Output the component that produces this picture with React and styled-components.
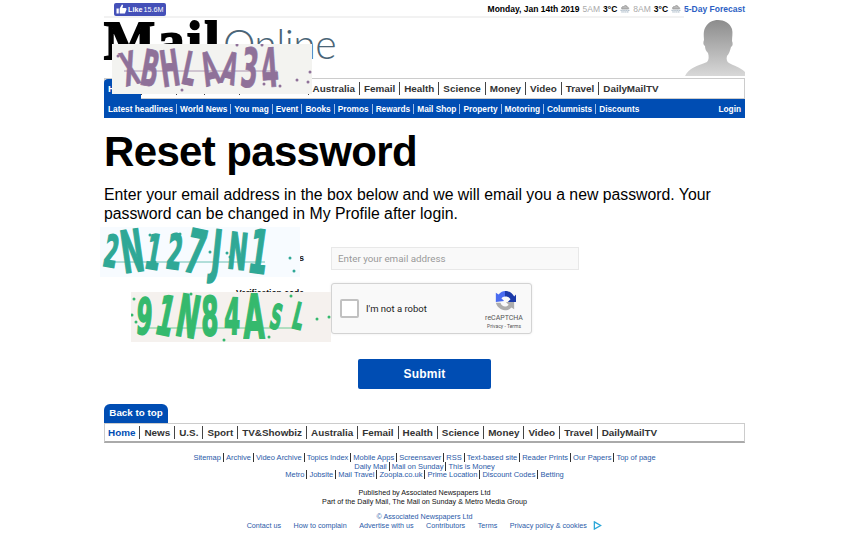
import React from "react";
import styled, { createGlobalStyle } from "styled-components";

const GlobalStyle = createGlobalStyle`
  html, body {
    margin: 0;
    padding: 0;
    background: #fff;
    font-family: "Liberation Sans", Arial, sans-serif;
    color: #000;
  }
  a {
    color: inherit;
    text-decoration: none;
  }
`;

const Page = styled.div`
  position: relative;
  width: 850px;
  height: 540px;
  overflow: hidden;
`;

const Wrap = styled.div`
  width: 641px;
  margin-left: 104px;
`;

const TopBar = styled.div`
  height: 16px;
  display: flex;
  align-items: center;
  justify-content: space-between;
  padding-left: 10px;
  font-size: 8.5px;
`;

const LikeButton = styled.span`
  display: inline-flex;
  align-items: center;
  gap: 1px;
  height: 13px;
  width: 52px;
  box-sizing: border-box;
  padding: 0 1px 0 2px;
  margin-top: 2px;
  background: #4450b8;
  border-radius: 2px;
  color: #fff;
  font-size: 7.2px;
  font-weight: bold;
  white-space: nowrap;
  svg {
    flex: none;
  }
  small {
    font-size: 7.2px;
    font-weight: normal;
  }
`;

const DateLine = styled.div`
  display: flex;
  align-items: center;
  gap: 3px;
  font-weight: bold;
  white-space: nowrap;
  padding-top: 1px;
`;

const Hour = styled.span`
  color: #aaa;
  font-weight: normal;
`;

const Forecast = styled.a`
  color: #2d5fc4;
`;

const Masthead = styled.div`
  height: 62px;
  position: relative;
  display: flex;
  justify-content: space-between;
  box-sizing: border-box;
  &::before {
    content: "";
    position: absolute;
    left: 0;
    top: 0;
    width: 580px;
    height: 2px;
    background: #f2f2f2;
  }
`;

const Logo = styled.div`
  display: flex;
  align-items: baseline;
  height: 60px;
  white-space: nowrap;
`;

const LogoMail = styled.span`
  display: inline-block;
  font-family: "Liberation Serif", serif;
  font-weight: bold;
  font-size: 54px;
  line-height: 50px;
  letter-spacing: 2.5px;
  -webkit-text-stroke: 2px #000;
`;

const LogoOnline = styled.span`
  display: inline-block;
  font-family: "Lato", sans-serif;
  font-weight: 300;
  font-size: 41px;
  line-height: 50px;
  letter-spacing: -0.6px;
  color: #4b6577;
  margin-left: 1px;
`;

const Silhouette = styled.svg`
  width: 60px;
  height: 60px;
`;

const Nav = styled.ul`
  list-style: none;
  margin: 0;
  height: ${(p) => (p.$closed ? 20 : 21)}px;
  box-sizing: border-box;
  padding: 0 0 ${(p) => (p.$closed ? 1 : 0)}px 3px;
  display: flex;
  align-items: center;
  background: #fff;
  border: 1px solid #ccc;
  border-bottom: ${(p) => (p.$closed ? "2px solid #aaa" : "1px solid #ccc")};
  font-size: 9.9px;
  font-weight: bold;
  color: #333;
`;

const NavItem = styled.li`
  padding: 0 4px;
  height: 13px;
  line-height: 13px;
  white-space: nowrap;
  border-left: 1px solid #444;
  color: #333;
  &:first-child {
    border-left: none;
    padding-left: 0;
    color: #004db3;
  }
`;

const TabItem = styled.li`
  align-self: flex-end;
  box-sizing: border-box;
  width: 37px;
  height: 20px;
  margin: 0 0 -1px -4px;
  padding-left: 4px;
  line-height: 19px;
  background: #004db3;
  color: #fff;
  border-radius: 4px 4px 0 0;
`;

const SubNav = styled.div`
  height: 19px;
  background: #004db3;
  color: #fff;
  display: flex;
  align-items: center;
  justify-content: space-between;
  padding: 0 4px;
  font-size: 8.3px;
  font-weight: bold;
`;

const SubLinks = styled.div`
  display: flex;
  align-items: center;
`;

const SubLink = styled.a`
  padding: 0 3px;
  border-left: 1px solid #9dbce6;
  line-height: 10px;
  white-space: nowrap;
  &:first-child {
    border-left: none;
    padding-left: 0;
  }
`;

const Title = styled.h1`
  margin: 9px 0 0;
  font-size: 42px;
  line-height: 50px;
  font-weight: bold;
  letter-spacing: -0.65px;
`;

const Intro = styled.p`
  margin: 8px 0 0;
  font-size: 15.8px;
  line-height: 19px;
`;

const Form = styled.form`
  margin-top: 24px;
  display: grid;
  grid-template-columns: 200px 248px;
  column-gap: 27px;
  row-gap: 13px;
`;

const Label = styled.label`
  text-align: right;
  font-size: 8.5px;
  font-weight: bold;
  line-height: ${(p) => p.$line}px;
  color: #111;
`;

const EmailInput = styled.input`
  width: 248px;
  height: 23px;
  box-sizing: border-box;
  border: 1px solid #e8e8e8;
  background: #f9f9f9;
  padding: 0 6px;
  font-family: "Roboto", "Liberation Sans", sans-serif;
  font-size: 9.8px;
  &::placeholder {
    color: #999;
    opacity: 1;
  }
`;

const Recaptcha = styled.div`
  width: 201px;
  height: 51px;
  box-sizing: border-box;
  border: 1px solid #d3d3d3;
  border-radius: 3px;
  background: #f9f9f9;
  box-shadow: 0 0 3px rgba(0, 0, 0, 0.08);
  display: flex;
  align-items: center;
  padding-left: 8px;
  font-family: "Roboto", sans-serif;
`;

const RobotBox = styled.span`
  width: 19px;
  height: 19px;
  box-sizing: border-box;
  background: #fff;
  border: 2px solid #c1c1c1;
  border-radius: 2px;
`;

const RobotText = styled.span`
  margin-left: 7px;
  font-size: 9.5px;
  color: #222;
  flex: 1;
`;

const RecaptchaBrand = styled.div`
  width: 50px;
  margin-right: 2px;
  padding-top: 2px;
  display: flex;
  flex-direction: column;
  align-items: center;
  color: #555;
  font-size: 7px;
  line-height: 9px;
  svg {
    width: 22px;
    height: 22px;
    margin: 0 0 2px 2px;
  }
  small {
    font-size: 5px;
    line-height: 7px;
  }
`;

const SubmitRow = styled.div`
  margin-left: 254px;
  margin-top: 25px;
`;

const Submit = styled.button`
  width: 133px;
  height: 30px;
  border: none;
  border-radius: 2px;
  background: #004db3;
  color: #fff;
  font-family: "Liberation Sans", sans-serif;
  font-size: 12px;
  font-weight: bold;
  letter-spacing: 0.2px;
`;

const BackToTop = styled.a`
  display: block;
  width: 64px;
  height: 19px;
  margin-top: 15px;
  background: #004db3;
  color: #fff;
  border-radius: 6px 6px 0 0;
  font-size: 9.8px;
  font-weight: bold;
  line-height: 18px;
  text-align: center;
`;

const FooterLinks = styled.div`
  margin-top: 11px;
  text-align: center;
  font-size: 7.5px;
  line-height: 8.7px;
  color: #2a5aa8;
`;

const FooterLink = styled.a`
  padding: 0 2px;
  border-left: 1px solid #333;
  &:first-child {
    border-left: none;
  }
`;

const Published = styled.div`
  margin-top: 8px;
  text-align: center;
  font-size: 7.2px;
  line-height: 9px;
  color: #111;
`;

const Copyright = styled.div`
  margin-top: 7px;
  text-align: center;
  font-size: 7.2px;
  line-height: 8px;
  color: #2a5aa8;
`;

const LegalRow = styled.div`
  display: flex;
  justify-content: center;
  align-items: center;
  gap: 12.5px;
  font-size: 7.2px;
  line-height: 9px;
  color: #2a5aa8;
  svg {
    width: 9px;
    height: 9px;
    margin-left: -6px;
  }
`;

const CaptchaBox = styled.div`
  position: absolute;
  left: ${(p) => p.$x}px;
  top: ${(p) => p.$y}px;
  width: 200px;
  height: 50px;
  background: ${(p) => p.$bg};
  color: ${(p) => p.$ink};
  svg {
    position: absolute;
    inset: 0;
    width: 200px;
    height: 50px;
  }
`;

const CaptchaText = styled.div`
  position: absolute;
  left: ${(p) => p.$left}px;
  top: 0;
  display: grid;
  grid-template-columns: repeat(8, ${(p) => p.$w}px);
  justify-items: center;
  align-items: center;
  height: 50px;
  font-family: "DejaVu Sans", sans-serif;
  font-weight: bold;
  line-height: 50px;
`;

const CaptchaChar = styled.span`
  font-size: ${(p) => p.$size}px;
  -webkit-text-stroke: ${(p) => p.$stroke}px currentColor;
  transform: rotate(${(p) => p.$r}deg) scaleX(0.46);
`;

const mainNav = ["Home", "News", "U.S.", "Sport", "TV&Showbiz", "Australia", "Femail", "Health", "Science", "Money", "Video", "Travel", "DailyMailTV"];
const subNav = ["Latest headlines", "World News", "You mag", "Event", "Books", "Promos", "Rewards", "Mail Shop", "Property", "Motoring", "Columnists", "Discounts"];
const footerRows = [
  ["Sitemap", "Archive", "Video Archive", "Topics Index", "Mobile Apps", "Screensaver", "RSS", "Text-based site", "Reader Prints", "Our Papers", "Top of page"],
  ["Daily Mail", "Mail on Sunday", "This is Money"],
  ["Metro", "Jobsite", "Mail Travel", "Zoopla.co.uk", "Prime Location", "Discount Codes", "Betting"],
];
const legal = ["Contact us", "How to complain", "Advertise with us", "Contributors", "Terms", "Privacy policy & cookies"];

const captchas = [
  { x: 112, y: 44, bg: "#f3f3f0", ink: "#8f7199", left: 8, text: "XBHLAA34", sizes: [46, 50, 50, 46, 46, 44, 54, 54], w: 20, stroke: 0.8, rot: [-14, 10, -8, 12, -16, 14, 6, -4], line: 27, dots: [[6, 12], [150, 1], [125, 1], [152, 40], [168, 42], [185, 36], [198, 28], [196, 38], [70, 46]] },
  { x: 100, y: 227, bg: "#f7fbff", ink: "#2fa896", left: 1, text: "2N127JN1", sizes: [44, 58, 48, 48, 60, 58, 50, 60], w: 21, stroke: 1.8, rot: [10, -8, 10, 8, 12, 6, 6, 8], line: 35, dots: [[50, 8], [80, 7], [110, 25], [127, 26], [55, 35], [190, 31], [194, 44], [130, 30]] },
  { x: 131, y: 292, bg: "#f5f1ee", ink: "#35b96d", left: 2, text: "91N84ASL", sizes: [50, 54, 58, 54, 50, 60, 34, 36], w: 22, stroke: 1.8, rot: [4, 12, 10, 0, 2, 0, 12, 14], line: 36, dots: [[3, 7], [1, 23], [5, 30], [60, 2], [160, 4], [186, 27], [198, 25], [138, 45], [93, 48]] },
];

const Captcha = ({ item }) => (
  <CaptchaBox $x={item.x} $y={item.y} $bg={item.bg} $ink={item.ink}>
    <svg viewBox="0 0 200 50">
      <line x1="12" y1={item.line} x2="165" y2={item.line} stroke={item.ink} strokeOpacity="0.7" strokeWidth="1" />
      {item.dots.map(([cx, cy], i) => (
        <circle key={i} cx={cx} cy={cy} r="1.5" fill={item.ink} />
      ))}
    </svg>
    <CaptchaText $left={item.left} $w={item.w}>
      {item.text.split("").map((c, i) => (
        <CaptchaChar key={i} $size={item.sizes[i]} $stroke={item.stroke} $r={item.rot[i]}>{c}</CaptchaChar>
      ))}
    </CaptchaText>
  </CaptchaBox>
);

const MainNav = ({ closed }) => (
  <Nav $closed={closed}>
    {mainNav.map((n, i) =>
      i === 0 && !closed ? <TabItem key={n}>{n}</TabItem> : <NavItem key={n}>{n}</NavItem>
    )}
  </Nav>
);

const Cloud = () => (
  <svg width="10" height="9" viewBox="0 0 11 9">
    <path d="M2 5C1 3 3 2 4 2.500 5 .5 8 1 8 3c2 0 2 2 1 2z" fill="#bbb" stroke="#888" strokeWidth="0.7" />
    <path d="M0.500 6.500h10M1.500 8.300h8" stroke="#8fa3b5" strokeWidth="1" strokeDasharray="1.500 0.600" />
  </svg>
);

export default function App() {
  return (
    <Page>
      <GlobalStyle />
      <Wrap>
        <TopBar>
          <LikeButton>
            <svg width="11" height="10" viewBox="0 0 24 22" fill="#fff">
              <path d="M1 10h5v11H1zM8 10l5-9c2 0 3 2 2 4l-1 4h7c2 0 2 2 2 3l-3 8c0 1-1 1-2 1H8z" />
            </svg>
            Like <small>15.6M</small>
          </LikeButton>
          <DateLine>
            Monday, Jan 14th 2019 <Hour>5AM</Hour> 3°C <Cloud /> <Hour>8AM</Hour> 3°C <Cloud /> <Forecast>5-Day Forecast</Forecast>
          </DateLine>
        </TopBar>
        <Masthead>
          <Logo>
            <LogoMail>Mail</LogoMail>
            <LogoOnline>Online</LogoOnline>
          </Logo>
          <Silhouette viewBox="0 0 60 60">
            <defs>
              <linearGradient id="sil" x1="0" y1="0" x2="0" y2="1">
                <stop offset="0" stopColor="#8c8c8c" />
                <stop offset="1" stopColor="#d8d8d8" />
              </linearGradient>
            </defs>
            <path fill="url(#sil)" d="M0 60C4 52 12 50 22 46c2-2 2-6 1-9-2-2-3-4-3-7-2-1-2-4-1-6 0-3-1-8 1-12 3-6 8-8 13-8 6 0 12 3 14 9 1 4 0 8 0 12 1 2 1 5-1 6-1 4-2 7-4 9-1 3 0 6 2 7 5 3 11 4 16 9v4z" />
          </Silhouette>
        </Masthead>
        <MainNav />
        <SubNav>
          <SubLinks>
            {subNav.map((s) => <SubLink key={s}>{s}</SubLink>)}
          </SubLinks>
          <span>Login</span>
        </SubNav>
        <Title>Reset password</Title>
        <Intro>Enter your email address in the box below and we will email you a new password. Your password can be changed in My Profile after login.</Intro>
        <Form>
          <Label $line={23}>Email address</Label>
          <EmailInput placeholder="Enter your email address" />
          <Label $line={20}>Verification code</Label>
          <Recaptcha>
            <RobotBox />
            <RobotText>I'm not a robot</RobotText>
            <RecaptchaBrand>
              <svg viewBox="0 0 24 24">
                <path fill="#adadad" d="M2 14h5c1 3 3 4 5 4 2 0 3-1 4-2l-3-3h9v8l-3-2c-2 2-4 3-7 3-5 0-9-4-10-8z" />
                <path fill="#4a6cf0" d="M2 13V3l3 2c2-3 5-4 7-4v6c-2 0-3 1-4 2l3 3z" />
                <path fill="#1c3aa9" d="M12 1c5 0 8 3 10 6l2-2v8h-9l3-3c-1-2-3-3-6-3z" />
              </svg>
              reCAPTCHA
              <small>Privacy - Terms</small>
            </RecaptchaBrand>
          </Recaptcha>
        </Form>
        <SubmitRow>
          <Submit type="button">Submit</Submit>
        </SubmitRow>
        <BackToTop>Back to top</BackToTop>
        <MainNav closed />
        <FooterLinks>
          {footerRows.map((row) => (
            <div key={row[0]}>
              {row.map((l) => <FooterLink key={l}>{l}</FooterLink>)}
            </div>
          ))}
        </FooterLinks>
        <Published>
          <div>Published by Associated Newspapers Ltd</div>
          <div>Part of the Daily Mail, The Mail on Sunday &amp; Metro Media Group</div>
        </Published>
        <Copyright>© Associated Newspapers Ltd</Copyright>
        <LegalRow>
          {legal.map((l) => <a key={l}>{l}</a>)}
          <svg viewBox="0 0 10 10">
            <path d="M1.500 1l7 4-7 4z" fill="none" stroke="#2aa6d8" strokeWidth="1.400" />
          </svg>
        </LegalRow>
      </Wrap>
      {captchas.map((c) => <Captcha key={c.x} item={c} />)}
    </Page>
  );
}
